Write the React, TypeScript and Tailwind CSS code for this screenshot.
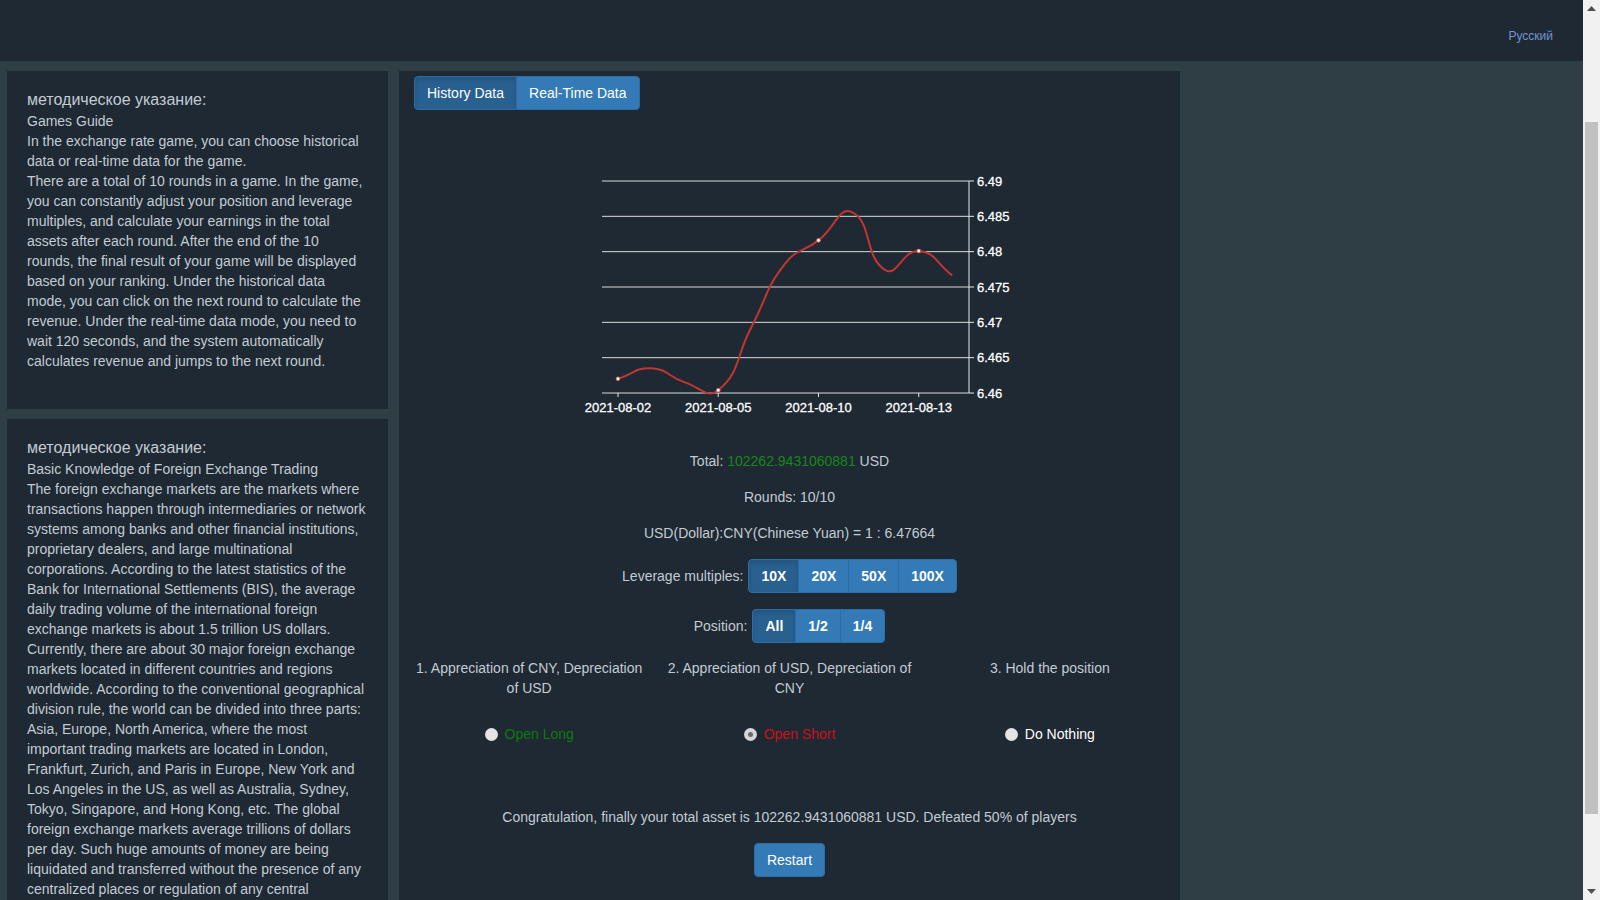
import * as React from 'react';

const rates = [6.462, 6.4635, 6.4615, 6.4604, 6.4694, 6.4783, 6.4816, 6.4856, 6.4774, 6.4801, 6.47664];
const yLabels = ['6.49', '6.485', '6.48', '6.475', '6.47', '6.465', '6.46'];
const xLabels = ['2021-08-02', '2021-08-05', '2021-08-10', '2021-08-13'];

// echarts-like smoothing: control points scaled by distance to neighbours
function smoothPath(pts: [number, number][]) {
    const s = 0.5;
    const cps = pts.map((p, i) => {
        const prev = pts[i - 1] ?? p;
        const next = pts[i + 1] ?? p;
        const vx = (next[0] - prev[0]) * s;
        const vy = (next[1] - prev[1]) * s;
        const d0 = Math.hypot(p[0] - prev[0], p[1] - prev[1]);
        const d1 = Math.hypot(next[0] - p[0], next[1] - p[1]);
        const sum = d0 + d1 || 1;
        return [
            [p[0] - (vx * d0) / sum, p[1] - (vy * d0) / sum],
            [p[0] + (vx * d1) / sum, p[1] + (vy * d1) / sum],
        ];
    });
    let d = `M${pts[0][0]},${pts[0][1]}`;
    for (let i = 1; i < pts.length; i++) {
        const c1 = cps[i - 1][1];
        const c2 = cps[i][0];
        d += ` C${c1[0].toFixed(2)},${c1[1].toFixed(2)} ${c2[0].toFixed(2)},${c2[1].toFixed(2)} ${pts[i][0].toFixed(2)},${pts[i][1].toFixed(2)}`;
    }
    return d;
}

function RateChart() {
    const top = 71;
    const bottom = 283;
    const left = 203;
    const right = 570;
    const step = (bottom - top) / 6;
    const pts: [number, number][] = rates.map((v, i) => [219 + i * 33.42, bottom - ((v - 6.46) / 0.03) * (bottom - top)]);
    const font = 'Liberation Sans, Arial, sans-serif';

    return (
        <svg width={781} height={320} className="block">
            {yLabels.map((l, k) => {
                const y = top + k * step;
                return (
                    <g key={l}>
                        <line x1={left} x2={right} y1={y} y2={y} stroke="#d9d9d9" strokeWidth={1} />
                        <line x1={right} x2={right + 5} y1={y} y2={y} stroke="#e6e6e6" strokeWidth={1} />
                        <text x={right + 8} y={y + 4.5} fill="#ffffff" stroke="#ffffff" strokeWidth={0.3} fontSize={13} fontFamily={font}>{l}</text>
                    </g>
                );
            })}
            <line x1={right} x2={right} y1={top} y2={bottom} stroke="#e6e6e6" strokeWidth={1} />
            {xLabels.map((l, k) => {
                const x = 219 + k * 100.26;
                return (
                    <g key={l}>
                        <line x1={x} x2={x} y1={bottom} y2={bottom + 4} stroke="#e6e6e6" strokeWidth={1} />
                        <text x={x} y={301.5} textAnchor="middle" fill="#ffffff" stroke="#ffffff" strokeWidth={0.3} fontSize={13} fontFamily={font}>{l}</text>
                    </g>
                );
            })}
            <path d={smoothPath(pts)} fill="none" stroke="#c23531" strokeWidth={2} />
            {[0, 3, 6, 9].map(i => (
                <circle key={i} cx={pts[i][0]} cy={pts[i][1]} r={2} fill="#ffffff" stroke="#c23531" strokeWidth={0.8} />
            ))}
        </svg>
    );
}

function Guide({subtitle, paragraphs, bottomPad}: {subtitle: string; paragraphs: string[]; bottomPad?: boolean}) {
    return (
        <div className={'bg-[#1e2933] pl-[20px] pr-[22px] pt-[18px] ' + (bottomPad ? 'pb-[38px]' : 'pb-[20px]')}>
            <div className="text-[16px] leading-[22px]">методическое указание:</div>
            <div className="leading-[20px]">{subtitle}</div>
            {paragraphs.map((p, i) => (
                <div key={i} className="leading-[20px]">{p}</div>
            ))}
        </div>
    );
}

function BtnGroup({items}: {items: string[]}) {
    return (
        <div className="flex">
            {items.map((it, i) => (
                <button
                    key={it}
                    type="button"
                    className={
                        'h-[34px] px-[12px] border border-[#2e6da4] text-white font-bold text-[14px] leading-[20px] ' +
                        (i === 0 ? 'rounded-l-[4px] bg-[#286090] shadow-[inset_0_3px_5px_rgba(0,0,0,0.125)] ' : '-ml-px bg-[#337ab7] ') +
                        (i === items.length - 1 ? 'rounded-r-[4px]' : '')
                    }
                >
                    {it}
                </button>
            ))}
        </div>
    );
}

function Radio({checked, label, color}: {checked?: boolean; label: string; color: string}) {
    return (
        <label className="flex items-center justify-center gap-[7px]">
            <span className={'w-[13px] h-[13px] rounded-full flex items-center justify-center ' + (checked ? 'bg-[#d6d6d6]' : 'bg-[#e4e4e4]')}>
                {checked && <span className="w-[5px] h-[5px] rounded-full bg-[#6b6b6b]" />}
            </span>
            <span className={color}>{label}</span>
        </label>
    );
}

function Scrollbar() {
    return (
        <div className="w-[17px] h-full shrink-0 bg-[#f1f1f1] flex flex-col">
            <div className="h-[17px] flex items-center justify-center">
                <svg width="9" height="5"><path d="M0 5 L4.5 0 L9 5Z" fill="#505050" /></svg>
            </div>
            <div className="flex-1 px-[2px] pt-[105px] pb-[69px]">
                <div className="h-full bg-[#c1c1c1]" />
            </div>
            <div className="h-[17px] flex items-center justify-center">
                <svg width="9" height="5"><path d="M0 0 L9 0 L4.5 5Z" fill="#505050" /></svg>
            </div>
        </div>
    );
}

export default function App() {
    return (
        <div className="flex h-screen font-['Liberation_Sans',Arial,sans-serif] text-[14px] text-[#c3cbd3]">
            <div className="flex-1 overflow-y-auto bg-[#2f3d45]">
                <header className="h-[61px] bg-[#1e2933] flex justify-end pr-[30px]">
                    <a className="pt-[28px] text-[12px] leading-[16px] text-[#7394d4] cursor-pointer">Русский</a>
                </header>
                <div className="flex items-start gap-[11px] pl-[7px] pt-[10px] pb-[20px]">
                    <div className="w-[381px] flex flex-col gap-[10px]">
                        <Guide
                            bottomPad
                            subtitle="Games Guide"
                            paragraphs={[
                                'In the exchange rate game, you can choose historical data or real-time data for the game.',
                                'There are a total of 10 rounds in a game. In the game, you can constantly adjust your position and leverage multiples, and calculate your earnings in the total assets after each round. After the end of the 10 rounds, the final result of your game will be displayed based on your ranking. Under the historical data mode, you can click on the next round to calculate the revenue. Under the real-time data mode, you need to wait 120 seconds, and the system automatically calculates revenue and jumps to the next round.',
                            ]}
                        />
                        <Guide
                            subtitle="Basic Knowledge of Foreign Exchange Trading"
                            paragraphs={[
                                'The foreign exchange markets are the markets where transactions happen through intermediaries or network systems among banks and other financial institutions, proprietary dealers, and large multinational corporations. According to the latest statistics of the Bank for International Settlements (BIS), the average daily trading volume of the international foreign exchange markets is about 1.5 trillion US dollars. Currently, there are about 30 major foreign exchange markets located in different countries and regions worldwide. According to the conventional geographical division rule, the world can be divided into three parts: Asia, Europe, North America, where the most important trading markets are located in London, Frankfurt, Zurich, and Paris in Europe, New York and Los Angeles in the US, as well as Australia, Sydney, Tokyo, Singapore, and Hong Kong, etc. The global foreign exchange markets average trillions of dollars per day. Such huge amounts of money are being liquidated and transferred without the presence of any centralized places or regulation of any central authority, relying on computer and telecommunication networks that connect traders around the world.',
                            ]}
                        />
                    </div>
                    <main className="w-[781px] bg-[#1e2933] pt-[5px] pb-[40px]">
                        <div className="flex pl-[15px]">
                            <button type="button" className="h-[34px] px-[12px] rounded-l-[4px] border border-[#2e6da4] bg-[#286090] text-white shadow-[inset_0_3px_5px_rgba(0,0,0,0.125)]">
                                History Data
                            </button>
                            <button type="button" className="-ml-px h-[34px] px-[12px] rounded-r-[4px] border border-[#2e6da4] bg-[#337ab7] text-white">
                                Real-Time Data
                            </button>
                        </div>
                        <RateChart />
                        <div className="mt-[21px] text-center leading-[20px]">
                            Total: <span className="text-[#178717]">102262.9431060881</span> USD
                        </div>
                        <div className="mt-[16px] text-center leading-[20px]">Rounds: 10/10</div>
                        <div className="mt-[16px] text-center leading-[20px]">USD(Dollar):CNY(Chinese Yuan) = 1 : 6.47664</div>
                        <div className="mt-[16px] flex justify-center items-center gap-[5px]">
                            <span>Leverage multiples:</span>
                            <BtnGroup items={['10X', '20X', '50X', '100X']} />
                        </div>
                        <div className="mt-[16px] flex justify-center items-center gap-[5px]">
                            <span>Position:</span>
                            <BtnGroup items={['All', '1/2', '1/4']} />
                        </div>
                        <div className="mt-[15px] grid grid-cols-3 leading-[20px] text-center">
                            <div className="px-[15px]">1. Appreciation of CNY, Depreciation of USD</div>
                            <div className="px-[6px]">2. Appreciation of USD, Depreciation of CNY</div>
                            <div className="px-[15px]">3. Hold the position</div>
                        </div>
                        <div className="mt-[26px] grid grid-cols-3 leading-[20px]">
                            <Radio label="Open Long" color="text-[#0c7a0c]" />
                            <Radio checked label="Open Short" color="text-[#cc1018]" />
                            <Radio label="Do Nothing" color="text-white" />
                        </div>
                        <div className="mt-[63px] text-center leading-[20px]">
                            Congratulation, finally your total asset is 102262.9431060881 USD. Defeated 50% of players
                        </div>
                        <div className="mt-[16px] flex justify-center">
                            <button type="button" className="h-[34px] px-[12px] rounded-[4px] border border-[#2e6da4] bg-[#337ab7] text-white">
                                Restart
                            </button>
                        </div>
                    </main>
                </div>
            </div>
            <Scrollbar />
        </div>
    );
}
